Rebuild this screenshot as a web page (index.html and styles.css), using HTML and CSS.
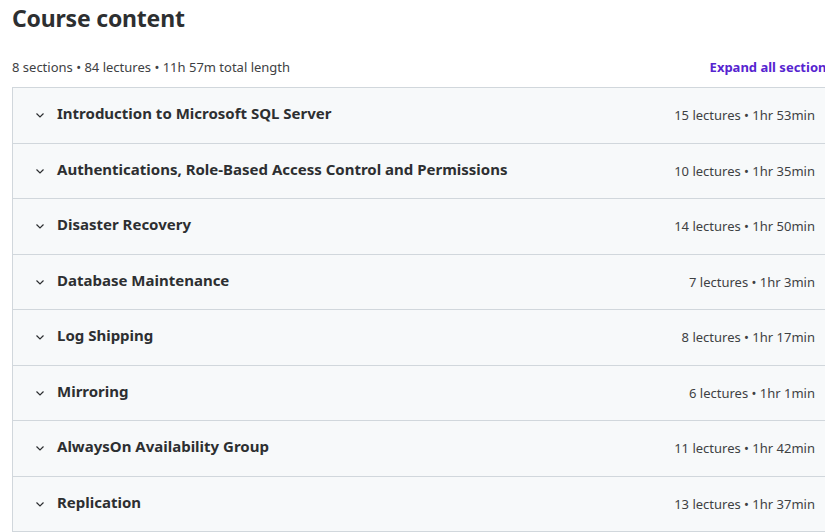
FILE: index.html
```html
<!DOCTYPE html>
<html lang="en">
<head>
  <meta charset="UTF-8">
  <title>Course content</title>
  <link rel="stylesheet" href="styles.css">
</head>
<body>
  <div class="curriculum">
    <h2 class="title">Course content</h2>
    <div class="summary">
      <span>8 sections • 84 lectures • 11h 57m total length</span>
      <button class="expand">Expand all sections</button>
    </div>
    <div class="sections">
      <div class="section">
        <svg class="chev" viewBox="0 0 12 12"><path d="M2.5 4.5 6 8l3.5-3.5"/></svg>
        <span class="name">Introduction to Microsoft SQL Server</span>
        <span class="meta">15 lectures • 1hr 53min</span>
      </div>
      <div class="section">
        <svg class="chev" viewBox="0 0 12 12"><path d="M2.5 4.5 6 8l3.5-3.5"/></svg>
        <span class="name">Authentications, Role-Based Access Control and Permissions</span>
        <span class="meta">10 lectures • 1hr 35min</span>
      </div>
      <div class="section">
        <svg class="chev" viewBox="0 0 12 12"><path d="M2.5 4.5 6 8l3.5-3.5"/></svg>
        <span class="name">Disaster Recovery</span>
        <span class="meta">14 lectures • 1hr 50min</span>
      </div>
      <div class="section">
        <svg class="chev" viewBox="0 0 12 12"><path d="M2.5 4.5 6 8l3.5-3.5"/></svg>
        <span class="name">Database Maintenance</span>
        <span class="meta">7 lectures • 1hr 3min</span>
      </div>
      <div class="section">
        <svg class="chev" viewBox="0 0 12 12"><path d="M2.5 4.5 6 8l3.5-3.5"/></svg>
        <span class="name">Log Shipping</span>
        <span class="meta">8 lectures • 1hr 17min</span>
      </div>
      <div class="section">
        <svg class="chev" viewBox="0 0 12 12"><path d="M2.5 4.5 6 8l3.5-3.5"/></svg>
        <span class="name">Mirroring</span>
        <span class="meta">6 lectures • 1hr 1min</span>
      </div>
      <div class="section">
        <svg class="chev" viewBox="0 0 12 12"><path d="M2.5 4.5 6 8l3.5-3.5"/></svg>
        <span class="name">AlwaysOn Availability Group</span>
        <span class="meta">11 lectures • 1hr 42min</span>
      </div>
      <div class="section">
        <svg class="chev" viewBox="0 0 12 12"><path d="M2.5 4.5 6 8l3.5-3.5"/></svg>
        <span class="name">Replication</span>
        <span class="meta">13 lectures • 1hr 37min</span>
      </div>
    </div>
  </div>
</body>
</html>
```

FILE: styles.css
```css
body { margin: 0; font-family: "Noto Sans", sans-serif; color: #2d2f31; background: #fff; overflow: hidden; }
.curriculum { width: 825px; padding-left: 12px; }
.title { margin: 0; padding-top: 3px; font-size: 23px; line-height: 30px; font-weight: 700; letter-spacing: -0.2px; }
.summary { display: flex; justify-content: space-between; align-items: center; margin-top: 24px; height: 20px; font-size: 13px; color: #3e4143; padding-right: 4px; }
.expand { background: none; border: none; padding: 0; font: inherit; font-weight: 700; color: #5624d0; cursor: pointer; white-space: nowrap; }
.sections { margin-top: 10px; border: 1px solid #d1d7dc; border-right: none; }
.section { display: flex; align-items: center; height: 54.5px; background: #f7f9fa; padding: 0 22px 0 21px; border-bottom: 1px solid #d1d7dc; }
.section:last-child { border-bottom: none; }
.chev { width: 12px; height: 12px; fill: none; stroke: #2d2f31; stroke-width: 1.2; margin-right: 11px; }
.name { flex: 1; font-size: 15px; font-weight: 700; padding-bottom: 4px; }
.meta { font-size: 13px; color: #3e4143; white-space: nowrap; }
```
